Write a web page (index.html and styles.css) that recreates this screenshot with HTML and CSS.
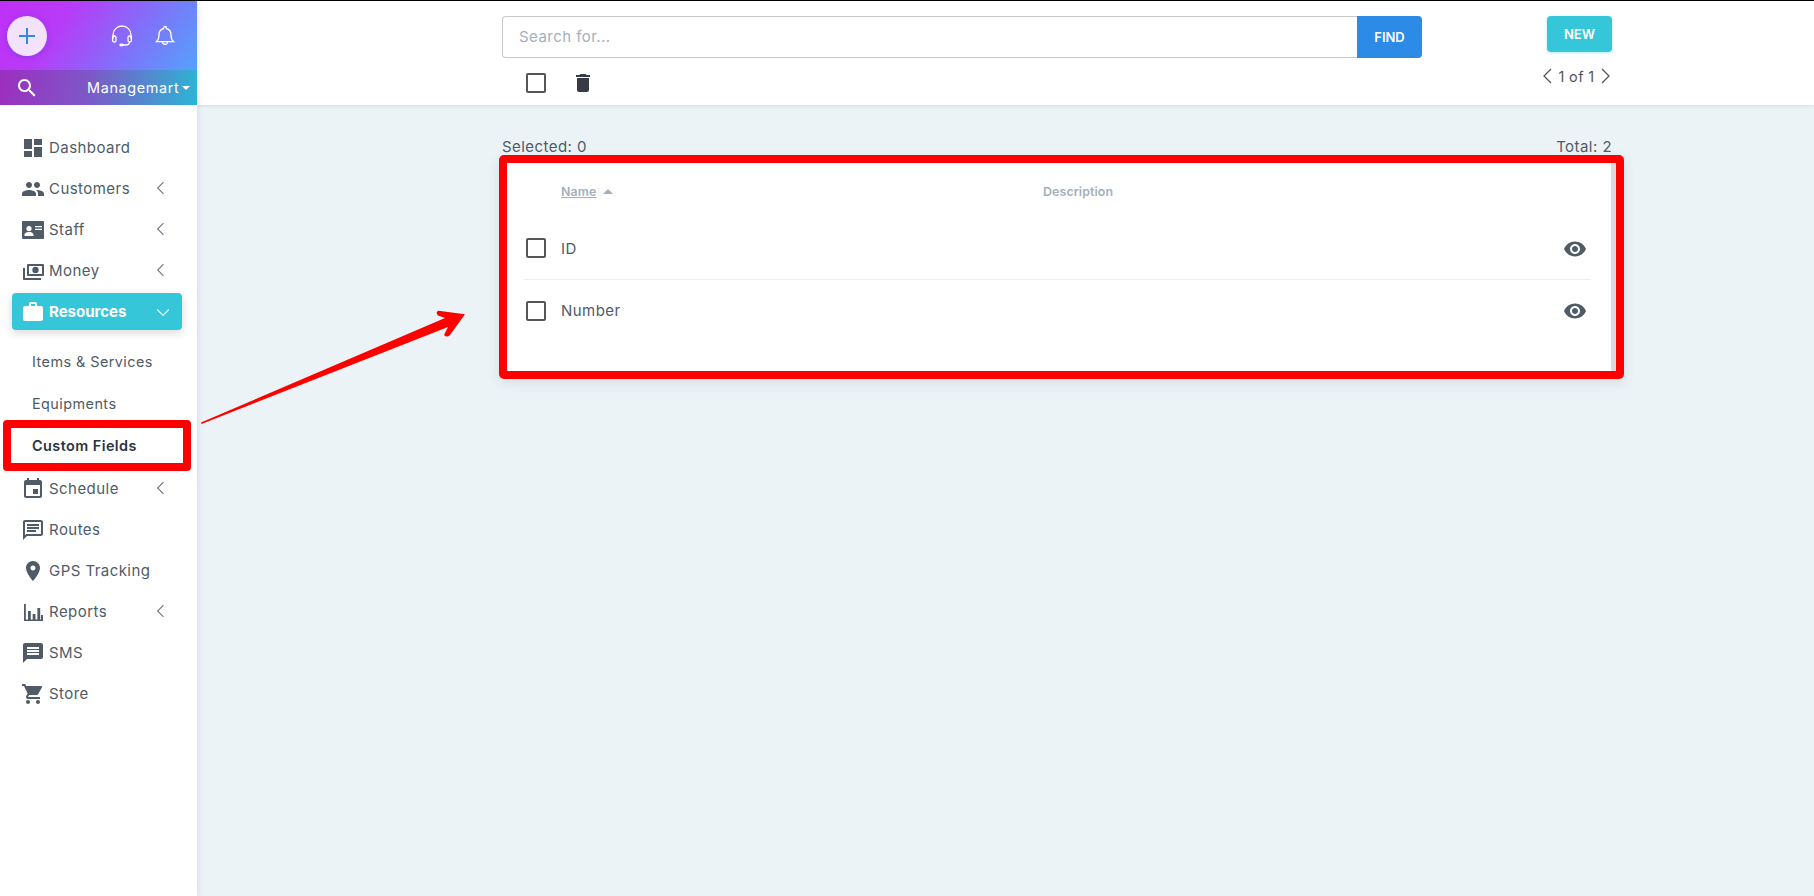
FILE: index.html
```html
<!DOCTYPE html>
<html lang="en">
<head>
  <meta charset="UTF-8" />
  <title>Custom Fields</title>
  <link rel="stylesheet" href="styles.css">
</head>
<body>
  <svg class="sprite" width="0" height="0">
    <symbol id="i-left" viewBox="0 0 24 24"><path d="M15 5l-7 7 7 7" fill="none" stroke="currentColor" stroke-width="1.3"/></symbol>
    <symbol id="i-eye" viewBox="0 0 24 24"><path d="M12 4.5C7 4.5 2.73 7.61 1 12c1.73 4.39 6 7.5 11 7.5s9.27-3.11 11-7.5c-1.73-4.39-6-7.5-11-7.5zM12 17c-2.76 0-5-2.24-5-5s2.24-5 5-5 5 2.24 5 5-2.24 5-5 5zm0-8c-1.66 0-3 1.34-3 3s1.34 3 3 3 3-1.34 3-3-1.34-3-3-3z"/></symbol>
    <symbol id="i-box" viewBox="0 0 24 24"><rect x="3" y="3" width="18" height="18" rx="1" fill="none" stroke="currentColor" stroke-width="2"/></symbol>
  </svg>

  <div class="app">
    <aside class="sidebar">
      <div class="brand">
        <div class="brand-top">
          <button class="btn-plus" type="button">
            <svg width="20" height="20" viewBox="0 0 20 20"><path d="M10 2v16M2 10h16" stroke="#2b8be6" stroke-width="2"/></svg>
          </button>
          <svg class="ic-headset" width="24" height="24" viewBox="0 0 24 24" fill="none" stroke="#fff" stroke-width="1.3"><path d="M3 15v-4a9 9 0 0 1 18 0v4"/><rect x="2.6" y="12" width="3.4" height="6" rx="1.5"/><rect x="18" y="12" width="3.4" height="6" rx="1.5"/><path d="M19.5 18c0 2-2 3-4 3h-3"/><ellipse cx="11.5" cy="21" rx="1.6" ry=".8"/></svg>
          <svg class="ic-bell" width="24" height="24" viewBox="0 0 24 24" fill="none" stroke="#fff" stroke-width="1.3"><path d="M12 2.5a1.4 1.4 0 0 1 1.4 1.4v.6c3 .8 4.6 3.2 4.6 6.2 0 4 .8 5.4 2.6 7H3.4c1.8-1.6 2.6-3 2.6-7 0-3 1.6-5.4 4.6-6.2v-.6A1.4 1.4 0 0 1 12 2.500z"/><path d="M9.500 17.800a2.500 2.500 0 0 0 5 0"/></svg>
        </div>
        <div class="brand-bottom">
          <svg width="24" height="24" viewBox="0 0 24 24" fill="#fff"><path d="M15.5 14h-.79l-.28-.27C15.41 12.59 16 11.11 16 9.500 16 5.910 13.090 3 9.500 3S3 5.910 3 9.500 5.910 16 9.500 16c1.610 0 3.090-.59 4.230-1.570l.27.28v.79l5 4.990L20.490 19l-4.990-5zm-6 0C7.010 14 5 11.990 5 9.500S7.010 5 9.500 5 14 7.010 14 9.500 11.990 14 9.500 14z"/></svg>
          <span class="company">Managemart</span><span class="caret"></span>
        </div>
      </div>

      <nav class="menu">
        <a class="item">
          <svg class="ic" viewBox="0 0 24 24"><path d="M3 13h8V3H3v10zm0 8h8v-6H3v6zm10 0h8V11h-8v10zm0-18v6h8V3h-8z"/></svg>
          <span>Dashboard</span>
        </a>
        <a class="item">
          <svg class="ic" viewBox="0 0 24 24"><path d="M16 11c1.660 0 2.990-1.340 2.990-3S17.660 5 16 5c-1.660 0-3 1.340-3 3s1.340 3 3 3zm-8 0c1.660 0 2.990-1.340 2.990-3S9.660 5 8 5C6.340 5 5 6.340 5 8s1.340 3 3 3zm0 2c-2.330 0-7 1.170-7 3.500V19h14v-2.500c0-2.330-4.670-3.500-7-3.500zm8 0c-.29 0-.62.02-.97.05 1.160.84 1.970 1.970 1.970 3.450V19h6v-2.500c0-2.330-4.670-3.500-7-3.500z"/></svg>
          <span>Customers</span>
          <svg class="chev"><use href="#i-left"/></svg>
        </a>
        <a class="item">
          <svg class="ic" viewBox="0 0 24 24"><path fill-rule="evenodd" d="M2 3h20a1 1 0 0 1 1 1v16a1 1 0 0 1-1 1H2a1 1 0 0 1-1-1V4a1 1 0 0 1 1-1zm6 5a2.600 2.600 0 1 0 0 5.200A2.600 2.600 0 0 0 8 8zm-4.500 10h9v-1.500c0-1.700-2.800-2.500-4.500-2.500s-4.500.8-4.500 2.500zM14 8v1.200h7V8zm0 2.800V12h7v-1.200z"/></svg>
          <span>Staff</span>
          <svg class="chev"><use href="#i-left"/></svg>
        </a>
        <a class="item">
          <svg class="ic" viewBox="0 0 24 24"><path fill-rule="evenodd" d="M7 5h15a1 1 0 0 1 1 1v10a1 1 0 0 1-1 1H7a1 1 0 0 1-1-1V6a1 1 0 0 1 1-1zm1 2v8h13V7zm6.500.8a3.200 3.200 0 1 1 0 6.400 3.200 3.200 0 0 1 0-6.400zM2 9h2v10h16v2H3a1 1 0 0 1-1-1z"/></svg>
          <span>Money</span>
          <svg class="chev"><use href="#i-left"/></svg>
        </a>
        <a class="item item-active">
          <svg class="ic" viewBox="0 0 24 24"><path d="M20 6h-4V4c0-1.110-.89-2-2-2h-4c-1.110 0-2 .89-2 2v2H4c-1.110 0-1.990.89-1.990 2L2 19c0 1.110.89 2 2 2h16c1.110 0 2-.89 2-2V8c0-1.110-.89-2-2-2zm-6 0h-4V4h4v2z"/></svg>
          <span>Resources</span>
          <svg class="chev chev-down"><use href="#i-left"/></svg>
        </a>
        <a class="subitem sub-first">Items &amp; Services</a>
        <a class="subitem">Equipments</a>
        <a class="subitem subitem-current">Custom Fields</a>
        <a class="item">
          <svg class="ic" viewBox="0 0 24 24"><path d="M17 12h-5v5h5v-5zM16 1v2H8V1H6v2H5c-1.110 0-1.990.9-1.990 2L3 19c0 1.100.89 2 2 2h14c1.100 0 2-.9 2-2V5c0-1.100-.9-2-2-2h-1V1h-2zm3 18H5V8h14v11z"/></svg>
          <span>Schedule</span>
          <svg class="chev"><use href="#i-left"/></svg>
        </a>
        <a class="item">
          <svg class="ic" viewBox="0 0 24 24"><path d="M20 2H4c-1.100 0-1.990.9-1.990 2L2 22l4-4h14c1.100 0 2-.9 2-2V4c0-1.100-.9-2-2-2zm0 14H5.170L4 17.170V4h16v12zM6 12h9v2H6zm0-3h12v2H6zm0-3h12v2H6z"/></svg>
          <span>Routes</span>
        </a>
        <a class="item">
          <svg class="ic" viewBox="0 0 24 24"><path d="M12 2C8.130 2 5 5.130 5 9c0 5.250 7 13 7 13s7-7.750 7-13c0-3.870-3.130-7-7-7zm0 9.500c-1.380 0-2.500-1.120-2.500-2.500s1.120-2.500 2.500-2.500 2.500 1.120 2.500 2.500-1.120 2.500-2.500 2.500z"/></svg>
          <span>GPS Tracking</span>
        </a>
        <a class="item">
          <svg class="ic" viewBox="0 0 24 24"><path d="M3 4h1.800v15.500H22V21H3zM7 11h2.800v8.500H7zm4.700 3h2.800v5.500h-2.800zM16.400 8h2.800v11.500h-2.800zM20 15h2v4.500h-2z"/></svg>
          <span>Reports</span>
          <svg class="chev"><use href="#i-left"/></svg>
        </a>
        <a class="item">
          <svg class="ic" viewBox="0 0 24 24"><path d="M20 2H4c-1.100 0-1.990.9-1.990 2L2 22l4-4h14c1.100 0 2-.9 2-2V4c0-1.100-.9-2-2-2zm-2 12H6v-2h12v2zm0-3H6V9h12v2zm0-3H6V6h12v2z"/></svg>
          <span>SMS</span>
        </a>
        <a class="item">
          <svg class="ic" viewBox="0 0 24 24"><path d="M7 18c-1.100 0-1.990.9-1.990 2S5.900 22 7 22s2-.9 2-2-.9-2-2-2zM1 2v2h2l3.600 7.590-1.350 2.450c-.16.28-.25.61-.25.96 0 1.100.9 2 2 2h12v-2H7.420c-.14 0-.25-.11-.25-.25l.03-.12.9-1.630h7.450c.75 0 1.410-.41 1.750-1.030l3.580-6.490c.08-.14.12-.31.12-.48 0-.55-.45-1-1-1H5.210l-.94-2H1zm16 16c-1.100 0-1.990.9-1.990 2s.89 2 1.990 2 2-.9 2-2-.9-2-2-2z"/></svg>
          <span>Store</span>
        </a>
      </nav>
    </aside>

    <main class="main">
      <header class="topbar">
        <div class="topbar-left">
          <form class="search">
            <input class="search-input" type="text" placeholder="Search for..." />
            <button class="btn-find" type="button">FIND</button>
          </form>
          <div class="bulk">
            <svg class="box"><use href="#i-box"/></svg>
            <svg class="trash" viewBox="0 0 24 24"><path d="M6 19c0 1.100.9 2 2 2h8c1.100 0 2-.9 2-2V7H6v12zM19 4h-3.500l-1-1h-5l-1 1H5v2h14V4z"/></svg>
          </div>
        </div>
        <div class="topbar-right">
          <button class="btn-new" type="button">NEW</button>
          <div class="pager">
            <svg class="pager-arrow" viewBox="0 0 12 18"><path d="M10 2L3 9l7 7" fill="none" stroke="currentColor" stroke-width="1.300"/></svg>
            <span>1 of 1</span>
            <svg class="pager-arrow" viewBox="0 0 12 18"><path d="M2 2l7 7-7 7" fill="none" stroke="currentColor" stroke-width="1.300"/></svg>
          </div>
        </div>
      </header>

      <section class="content">
        <div class="counts">
          <span>Selected: 0</span>
          <span>Total: 2</span>
        </div>
        <div class="card">
          <div class="row row-head">
            <span class="col-check"></span>
            <span class="col-name"><u>Name</u><i class="sort-up"></i></span>
            <span class="col-desc">Description</span>
          </div>
          <div class="row row-first">
            <span class="col-check"><svg class="box"><use href="#i-box"/></svg></span>
            <span class="col-name">ID</span>
            <span class="col-desc"></span>
            <svg class="eye"><use href="#i-eye"/></svg>
          </div>
          <div class="row">
            <span class="col-check"><svg class="box"><use href="#i-box"/></svg></span>
            <span class="col-name">Number</span>
            <span class="col-desc"></span>
            <svg class="eye"><use href="#i-eye"/></svg>
          </div>
        </div>
      </section>
    </main>
  </div>

  <!-- annotation arrow -->
  <svg class="arrow" width="280" height="125" viewBox="0 0 280 125">
    <path d="M1 123.500L245 19 238 16.500Q235 13 238.500 11.800L265 15.300 250 36Q247 39 244 36L248 28 1.500 125z" fill="#f00"/>
  </svg>
</body>
</html>
```

FILE: styles.css
```css
* {
  box-sizing: border-box;
}
html, body {
  margin: 0;
  height: 100%;
}
body {
  font-family: Inter, 'Open Sans', sans-serif;
  font-size: 15px;
  letter-spacing: 0.45px;
  color: #4f5b67;
  background-color: #ecf3f7;
  border-top: 1px solid #000;
  overflow: hidden;
  position: relative;
}
.sprite {
  position: absolute;
}
.app {
  display: flex;
  height: 895px;
}

/* sidebar */
.sidebar {
  width: 197px;
  flex: none;
  background: white;
  box-shadow: 1px 0 6px rgba(60, 80, 100, 0.14);
  position: relative;
  z-index: 2;
}
.brand {
  background: linear-gradient(125deg, #c02ff6 0%, #b83bf7 28%, #7d74fa 62%, #47b1fb 100%);
}
.brand-top {
  height: 69px;
  display: flex;
  align-items: center;
  padding: 0 0 0 7px;
}
.btn-plus {
  width: 40px;
  height: 40px;
  border: none;
  border-radius: 50%;
  background: #f3e2fc;
  box-shadow: 0 1px 6px rgba(60, 60, 200, 0.35);
  display: flex;
  align-items: center;
  justify-content: center;
  padding: 0;
}
.ic-headset {
  margin-left: 63px;
}
.ic-bell {
  margin-left: 19px;
}
.brand-bottom {
  height: 35px;
  display: flex;
  align-items: center;
  padding-left: 15px;
  color: white;
  background: linear-gradient(100deg, #9d2ebf 0%, #7d58c8 45%, #2bb6d5 100%);
}
.company {
  margin-left: 48px;
  font-size: 14.4px;
  letter-spacing: 0.65px;
  white-space: nowrap;
}
.caret {
  margin-left: 3px;
  border: 4px solid transparent;
  border-top-color: white;
  border-bottom: none;
}
.menu {
  padding-top: 22px;
}
.item {
  height: 41px;
  display: flex;
  align-items: center;
  padding-left: 21px;
  white-space: nowrap;
  position: relative;
}
.item .ic {
  width: 24px;
  height: 24px;
  flex: none;
  margin-right: 4px;
  fill: #4f5b67;
}
.chev {
  position: absolute;
  left: 151px;
  top: 10px;
  width: 20px;
  height: 20px;
  color: #6b7783;
}
.chev-down {
  transform: rotate(-90deg);
  color: white;
  left: 141px;
  top: 9px;
}
.item-active {
  height: 37px;
  margin: 2px 15px 0 12px;
  padding-left: 9px;
  background-color: #36c6da;
  border-radius: 4px;
  color: white;
  font-weight: 700;
  letter-spacing: 0;
  box-shadow: 0 3px 10px rgba(0, 0, 0, 0.15);
}
.item-active .ic {
  fill: white;
}
.subitem {
  display: block;
  height: 42px;
  line-height: 42px;
  padding-left: 32px;
  font-size: 14.4px;
}
.sub-first {
  margin-top: 11px;
}
.subitem-current {
  height: 51px;
  line-height: 35px;
  margin: -5px 6px -3px 3px;
  padding-left: 21px;
  border: 8px solid #f00;
  border-radius: 4px;
  color: #2c3440;
  font-weight: 600;
  position: relative;
}

/* top bar */
.main {
  flex: 1;
  min-width: 0;
}
.topbar {
  height: 104px;
  background: white;
  display: flex;
  box-shadow: 0 1px 3px rgba(60, 80, 100, 0.12);
  padding: 15px 202px 0 305px;
  justify-content: space-between;
}
.topbar-left {
  width: 920px;
}
.search {
  display: flex;
  height: 42px;
  margin: 0;
}
.search-input {
  flex: 1;
  height: 42px;
  padding: 0 16px 2px;
  border: 1px solid #c6c8ca;
  border-right: none;
  border-radius: 4px 0 0 4px;
  font-family: inherit;
  font-size: 15px;
  letter-spacing: 0.45px;
  outline: none;
}
.search-input::placeholder {
  color: #a3b0bc;
}
.btn-find {
  width: 65px;
  border: none;
  border-radius: 0 4px 4px 0;
  background-color: #2b8be6;
  color: white;
  font-family: inherit;
  font-size: 13px;
  font-weight: 600;
  padding: 0;
}
.bulk {
  display: flex;
  align-items: center;
  gap: 23px;
  padding: 13px 0 0 22px;
}
.box {
  width: 24px;
  height: 24px;
  display: block;
  color: #555;
}
.trash {
  width: 24px;
  height: 24px;
  fill: #363b45;
}
.topbar-right {
  width: 65px;
  display: flex;
  flex-direction: column;
  align-items: center;
}
.btn-new {
  width: 65px;
  height: 36px;
  border: none;
  border-radius: 4px;
  background-color: #36c6da;
  color: white;
  font-family: inherit;
  font-size: 13px;
  font-weight: 600;
  padding: 0;
  box-shadow: 0 1px 3px rgba(54, 198, 218, 0.4);
}
.pager {
  display: flex;
  align-items: center;
  gap: 5px;
  margin-top: 15px;
  margin-right: 6px;
  font-size: 14.4px;
  letter-spacing: 0.4px;
  white-space: nowrap;
  color: #555;
}
.pager-arrow {
  width: 12px;
  height: 18px;
  flex: none;
}

/* list */
.content {
  padding: 32px 190px 0 302px;
}
.counts {
  display: flex;
  justify-content: space-between;
  padding: 0 12px 0 3px;
  height: 18px;
  line-height: 20px;
}
.card {
  height: 224px;
  background: white;
  border: 8px solid #f00;
  border-radius: 5px;
  box-shadow: 0 4px 12px rgba(60, 80, 100, 0.12), inset -5px 0 0 #d8dcde;
  padding: 0 25px 0 17px;
}
.row {
  display: flex;
  align-items: center;
  height: 61px;
  position: relative;
}
.row-head {
  height: 56px;
  font-size: 12.4px;
  font-weight: 600;
  letter-spacing: 0.1px;
  color: #a3b0bc;
}
.row-first {
  height: 61px;
  padding-bottom: 2px;
  border-bottom: 1px solid #eceef0;
}
.col-check {
  width: 37px;
  flex: none;
}
.col-name {
  width: 482px;
  flex: none;
}
.sort-up {
  display: inline-block;
  margin-left: 7px;
  vertical-align: 2px;
  border: 5px solid transparent;
  border-bottom-color: #a3b0bc;
  border-top: none;
}
.eye {
  position: absolute;
  right: 4px;
  top: 50%;
  margin-top: -12px;
  width: 24px;
  height: 24px;
  fill: #4f5b67;
}

/* annotation over the page */
.arrow {
  position: absolute;
  left: 200px;
  top: 298px;
  z-index: 3;
}
```
